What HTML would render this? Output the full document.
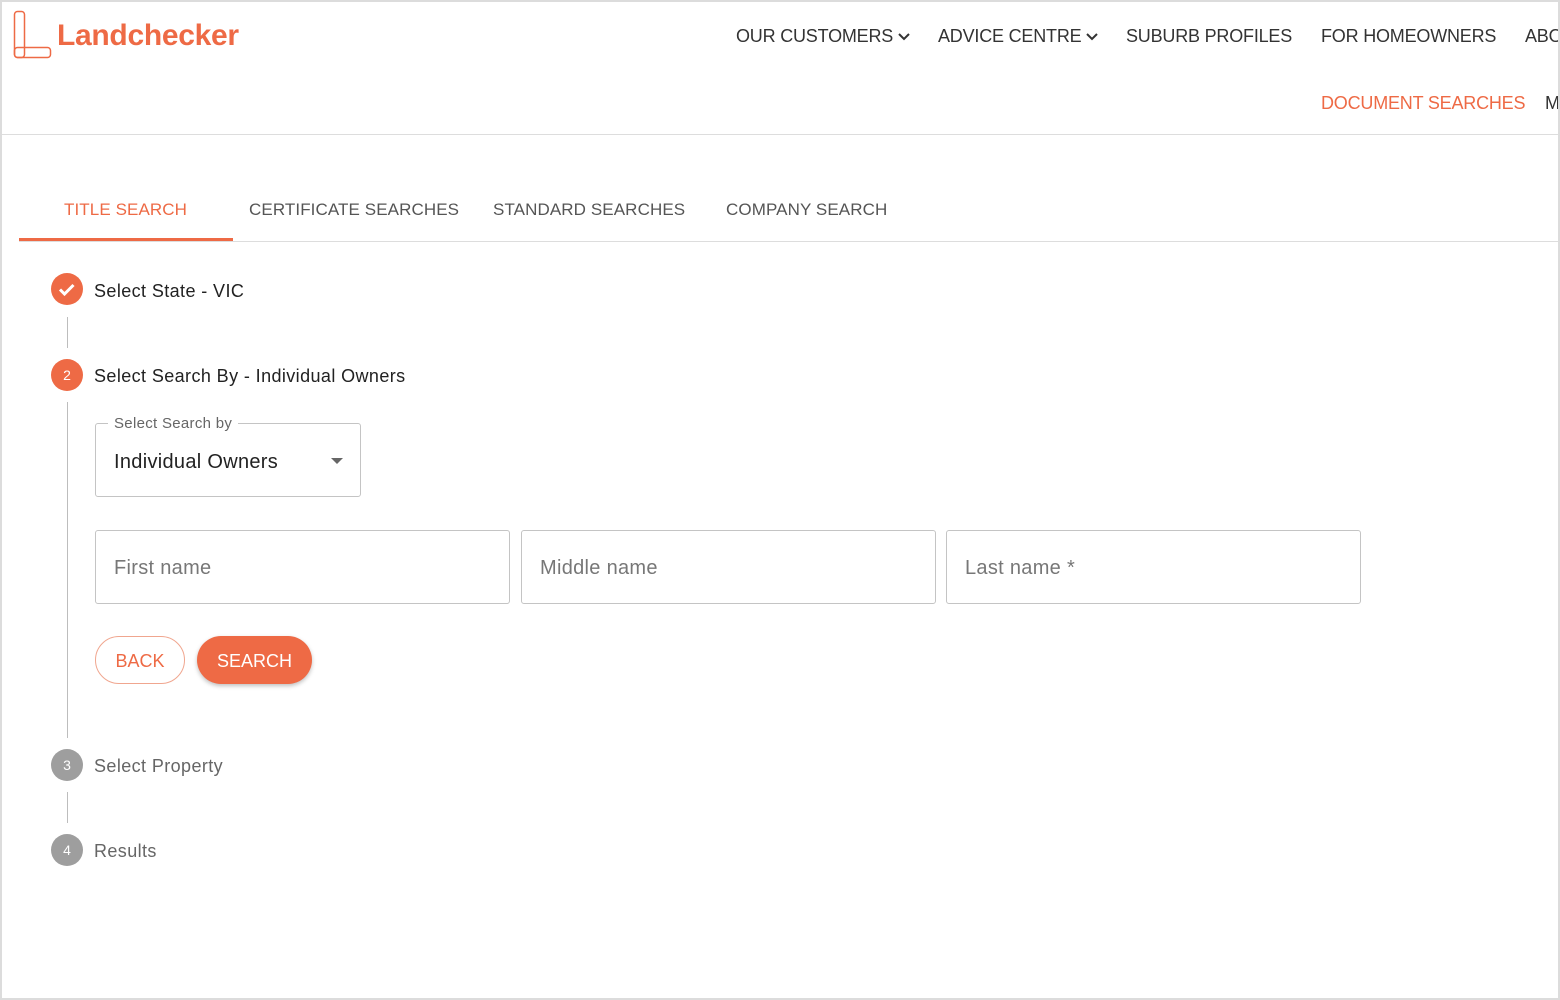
<!DOCTYPE html>
<html><head><style>
body{margin:0;width:1560px;height:1000px;overflow:hidden;background:#fff;font-family:"Liberation Sans",sans-serif;}
.frame{position:absolute;left:0;top:0;width:1556px;height:996px;border:2px solid #dcdcdc;overflow:hidden}
.a{position:absolute;white-space:nowrap}
.nav{font-size:18px;color:#333;top:24px;letter-spacing:-0.2px}
.tab{font-size:17px;color:#555;top:199px;letter-spacing:0.1px}
.o{color:#ee6a45}
.circ{position:absolute;width:32px;height:32px;border-radius:50%;color:#fff;font-size:14px;text-align:center;line-height:32px}
.vl{position:absolute;left:65px;width:1px;background:#bdbdbd}
.step{font-size:18px;color:#222;letter-spacing:0.4px}
.box{position:absolute;border:1px solid #c4c4c4;border-radius:3px;height:72px;top:528px}
.ph{position:absolute;left:18px;top:26px;font-size:20px;color:#777;letter-spacing:0.3px}
</style></head><body><div class="frame">
<svg class="a" style="left:11px;top:8px" width="40" height="50"><rect x="1.5" y="1.5" width="10" height="46" rx="3" fill="none" stroke="#ee6a45" stroke-width="1.5"/><rect x="1.5" y="37.5" width="36" height="10" rx="3" fill="none" stroke="#ee6a45" stroke-width="1.5"/></svg>
<div class="a o" style="left:55px;top:17px;font-size:30px;font-weight:bold;letter-spacing:-0.3px">Landchecker</div>
<div class="a nav" style="left:734px">OUR CUSTOMERS <svg width="12" height="10"><path d="M1 2l5 5 5-5" fill="none" stroke="#333" stroke-width="2"/></svg></div>
<div class="a nav" style="left:936px">ADVICE CENTRE <svg width="12" height="10"><path d="M1 2l5 5 5-5" fill="none" stroke="#333" stroke-width="2"/></svg></div>
<div class="a nav" style="left:1124px">SUBURB PROFILES</div>
<div class="a nav" style="left:1319px">FOR HOMEOWNERS</div>
<div class="a nav" style="left:1523px">ABOUT</div>
<div class="a nav o" style="left:1319px;top:91px">DOCUMENT SEARCHES</div>
<div class="a nav" style="left:1543px;top:91px">MORE</div>
<div class="a" style="left:0;top:132px;width:1560px;height:1px;background:#ddd"></div>
<div class="a tab o" style="left:62px;top:198px">TITLE SEARCH</div>
<div class="a tab" style="left:247px;top:198px">CERTIFICATE SEARCHES</div>
<div class="a tab" style="left:491px;top:198px">STANDARD SEARCHES</div>
<div class="a tab" style="left:724px;top:198px">COMPANY SEARCH</div>
<div class="a" style="left:17px;top:239px;width:1541px;height:1px;background:#ddd"></div>
<div class="a" style="left:17px;top:236px;width:214px;height:3px;background:#ee6a45"></div>
<div class="circ" style="left:49px;top:271px;background:#ee6a45"><svg width="32" height="32"><path d="M9 16.5l4.5 4.5 9-9" fill="none" stroke="#fff" stroke-width="3"/></svg></div>
<div class="a step" style="left:92px;top:279px">Select State - VIC</div>
<div class="vl" style="top:315px;height:31px"></div>
<div class="circ" style="left:49px;top:357px;background:#ee6a45">2</div>
<div class="a step" style="left:92px;top:364px">Select Search By - Individual Owners</div>
<div class="vl" style="top:400px;height:336px"></div>
<div class="box" style="left:93px;top:421px;width:264px"><div class="a" style="left:12px;top:-9px;background:#fff;padding:0 6px;font-size:15px;color:#666;letter-spacing:0.3px">Select Search by</div><div class="a" style="left:18px;top:27px;font-size:20px;color:#222;letter-spacing:0.3px">Individual Owners</div><div class="a" style="left:235px;top:34px;border:6px solid transparent;border-top:6px solid #666;border-bottom:0"></div></div>
<div class="box" style="left:93px;width:413px"><div class="ph">First name</div></div>
<div class="box" style="left:519px;width:413px"><div class="ph">Middle name</div></div>
<div class="box" style="left:944px;width:413px"><div class="ph">Last name *</div></div>
<div class="a" style="left:93px;top:634px;width:88px;height:46px;border:1px solid #f0a68f;border-radius:24px;color:#ee6a45;font-size:18px;text-align:center;line-height:48px">BACK</div>
<div class="a" style="left:195px;top:634px;width:115px;height:48px;background:#ee6a45;border-radius:24px;color:#fff;font-size:18px;text-align:center;line-height:50px;box-shadow:0 2px 4px rgba(0,0,0,.25)">SEARCH</div>
<div class="circ" style="left:49px;top:747px;background:#9e9e9e">3</div>
<div class="a step" style="left:92px;top:754px;color:#666">Select Property</div>
<div class="vl" style="top:790px;height:31px"></div>
<div class="circ" style="left:49px;top:832px;background:#9e9e9e">4</div>
<div class="a step" style="left:92px;top:839px;color:#666">Results</div>
</div></body></html>
